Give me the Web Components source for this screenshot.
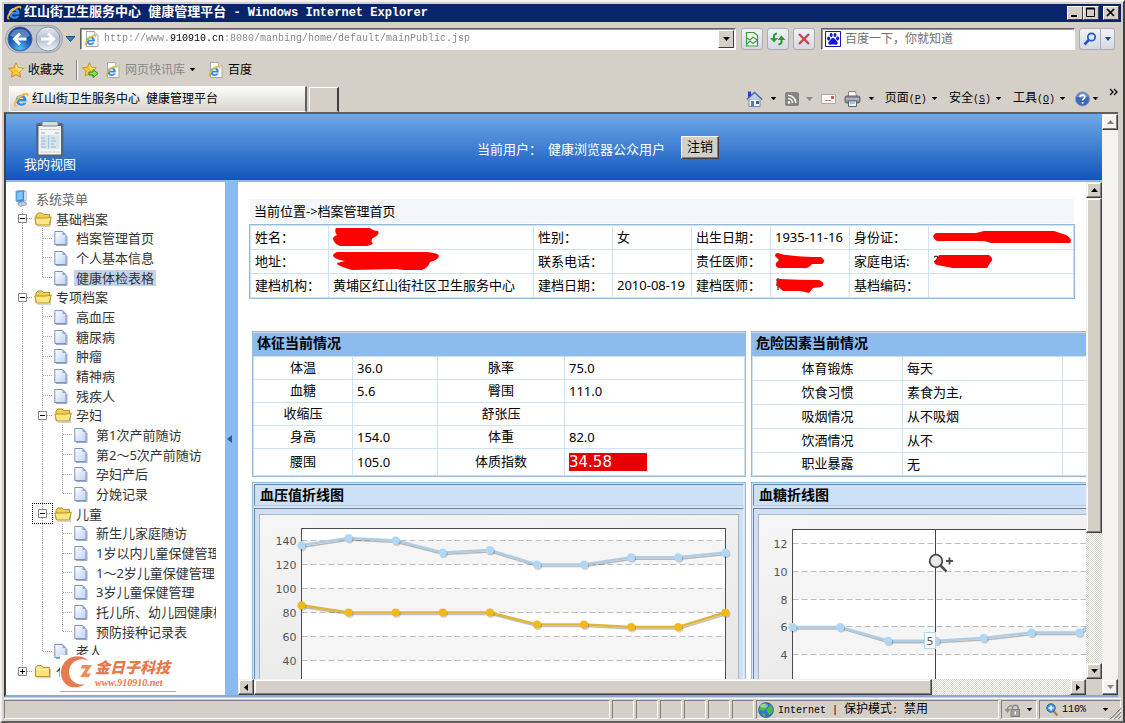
<!DOCTYPE html>
<html lang="zh-CN">
<head>
<meta charset="utf-8">
<title>红山街卫生服务中心 健康管理平台</title>
<style>
html,body{margin:0;height:100%;overflow:hidden}
body{font:12px/16px "Liberation Sans","Noto Sans CJK SC",sans-serif;background:#d4d0c8;color:#000}
</style>
</head>
<body>
<app-window></app-window>
<script>
const BASE = `*,:host{box-sizing:border-box}
button,input{font:inherit;color:inherit;margin:0;padding:0;border:0;background:none;border-radius:0;outline:0}
a{color:inherit;text-decoration:none}
.m{font-family:"Liberation Mono",monospace;font-size:10px}
ui-icon{flex:none}`;
function define(name, css, html, ready) {
  customElements.define(name, class extends HTMLElement {
    constructor() {
      super();
      this.attachShadow({ mode: 'open' });
    }
    connectedCallback() {
      if (this.shadowRoot.childNodes.length) return;
      const t = document.createElement('template');
      t.innerHTML = `<style>${BASE}${css}</style>${typeof html === 'function' ? html(this) : html}`;
      this.shadowRoot.append(t.content.cloneNode(true));
      if (ready) ready(this);
    }
  });
}

/* ---------- icons ---------- */
const E = `<path d="M3.300 9.400h10.200c.4-4-1.900-6.400-5.200-6.400-3.300 0-5.500 2.300-5.500 5.300 0 3.200 2.200 5.400 5.600 5.400 2.300 0 4.100-1 4.900-3h-3c-.5.600-1 .900-1.900.900-1.400 0-2.200-.9-2.200-2.200zm2.900-2.300c.3-1.100 1-1.700 2.100-1.700s1.900.6 2.100 1.700z" fill="#2f8fe6"/><path d="M4 6.500C5 4 7 3.200 9 3.500" fill="none" stroke="#9ad4ff" stroke-width="1"/><path d="M1.800 14.600C-.4 12.500 3 6.500 7.500 3.300 11 .8 14.800.3 15.200 2c.2.700-.1 1.500-.6 2.500.2-2-1.400-2.200-4-1C6.500 5.500 2.800 10.500 2.500 13c0 .7.5 1 1.300.8-.7.6-1.500 1-2 .8z" fill="#f8bf34" stroke="#d8991c" stroke-width=".3"/>`;
const DOC = `<path d="M2.500.5h8l3.500 3.500v11.500H2.500z" fill="#fff" stroke="#a8a8a0"/><path d="M10.500.5V4H14" fill="#e8e8e8" stroke="#b8b8b0"/>`;
const STAR = `<path d="M8 .8l2.200 4.900 5.300.6-3.900 3.600 1.100 5.300L8 12.600l-4.700 2.600 1.100-5.300L.5 6.300l5.300-.6z" fill="#fcc63a" stroke="#c98a14" stroke-width=".9"/><path d="M8 3l1.400 3.600 3.600.5-2.600 2.300" fill="none" stroke="#fff0a8" stroke-width="1.200"/>`;
const ICONS = {
  ie: [16, 16, E],
  iedoc: [16, 16, DOC + `<g transform="translate(0 3) scale(.8)">${E}</g>`],
  star: [16, 16, STAR],
  staradd: [17, 16, `<g transform="scale(.92)">${STAR}</g><path d="M7 10h4V7.500l5 4-5 4V13H7z" fill="#8ce04a" stroke="#2f8a1a"/>`],
  back: [28, 26, `<defs><radialGradient id="b" cx=".5" cy=".9" r=".95"><stop offset="0" stop-color="#4fc3f8"/><stop offset=".45" stop-color="#1c62c0"/><stop offset="1" stop-color="#0c3488"/></radialGradient></defs><circle cx="14" cy="13" r="12" fill="url(#b)" stroke="#48608c"/><path d="M4 10a10.500 10.500 0 0 1 20 0q-10 3-20 0z" fill="#fff" opacity=".3"/><path d="M20.500 13H9m5-5.500L8.500 13l5.500 5.500" fill="none" stroke="#fff" stroke-width="3"/>`],
  fwd: [28, 26, `<defs><linearGradient id="f" x2="0" y2="1"><stop offset="0" stop-color="#e8ecf2"/><stop offset=".5" stop-color="#b4bfce"/><stop offset="1" stop-color="#eef4fa"/></linearGradient></defs><circle cx="14" cy="13" r="12" fill="url(#f)" stroke="#8893a5"/><path d="M7 13h12m-5-5.500l5.500 5.500-5.500 5.500" fill="none" stroke="#fff" stroke-width="3"/>`],
  caret: [7, 4, `<path d="M1 0h5L3.500 3z" fill="#000" stroke="#000" stroke-width=".4"/>`],
  arrow: [7, 4, `<path d="M0 0h7L3.500 4z" fill="#000"/>`],
  caretgray: [7, 4, `<path d="M0 0h7L3.500 4z" fill="#8a8a8a"/>`],
  caretblue: [9, 6, `<path d="M0 .5h9L4.500 5.500z" fill="#2a86c8" stroke="#0c3d70" stroke-width=".8"/>`],
  caretnavy: [7, 4, `<path d="M1 0h6L4 4z" fill="#1c4b80"/>`],
  broken: [14, 16, `<path d="M2 1.500h7l3.500 3V15H1.500V1.500z" fill="#fff" stroke="#3d9a3d" stroke-width="1.200"/><path d="M2 7l3 2 3-3 4 3M2 13l3-3 3 2.500 4-3" fill="none" stroke="#3d9a3d" stroke-width="1.200"/>`],
  refresh: [16, 14, `<path d="M0 6h8L4 10.500z" fill="#2f9a2f"/><path d="M4 6.500V4q0-2 3-2.500" fill="none" stroke="#2f9a2f" stroke-width="2"/><path d="M7.500 8h8l-4-4.500z" fill="#2f9a2f"/><path d="M11.500 7.500V10q0 2-3 2.500" fill="none" stroke="#2f9a2f" stroke-width="2"/>`],
  stop: [14, 14, `<path d="M2 2l10 10M12 2L2 12" stroke="#c44848" stroke-width="2.400"/>`],
  paw: [16, 16, `<path d="M.5.5h15v15H.5z" fill="#fff" stroke="#1818a8"/><g fill="#1414d8"><ellipse cx="3.600" cy="7.500" rx="1.500" ry="2"/><ellipse cx="6.200" cy="4" rx="1.500" ry="2"/><ellipse cx="10" cy="4" rx="1.500" ry="2"/><ellipse cx="12.600" cy="7.500" rx="1.500" ry="2"/><path d="M8 7c2 0 2.500 2 4 3.500 1.300 1.500.5 3.500-1.500 3.300-1.500-.3-3.500-.3-5 0-2 .2-2.800-1.800-1.500-3.300C5.500 9 6 7 8 7z"/></g>`],
  mag: [14, 14, `<circle cx="8.500" cy="5" r="3.700" fill="#dcebff" stroke="#2458c8" stroke-width="1.700"/><path d="M5.800 8L1.500 12.500" stroke="#2458c8" stroke-width="2.600"/>`],
  min: [14, 12, `<path d="M3 8h6v2H3z"/>`],
  max: [14, 12, `<path d="M2.500 1v8.500h8V1z" fill="none" stroke="#000"/><path d="M2 1h9v1.500H2z"/>`],
  close: [14, 12, `<path d="M3 2l7 7M10 2L3 9" stroke="#000" stroke-width="1.700"/>`],
  home: [17, 16, `<path d="M3 8h11v7.500H3z" fill="#f4f6fc" stroke="#7888a8"/><path d="M.8 8.500L8.500 1.500l7.700 7" fill="#c3cee6" stroke="#5068a0" stroke-width="1.400"/><path d="M2 .5h3v4l-3 2.500z" fill="#2c38c8"/><path d="M5 10h3v5.500H5z" fill="#5a7ab8"/><path d="M10 10h3v3h-3z" fill="#356a80"/>`],
  rss: [14, 14, `<rect width="14" height="14" rx="2" fill="#848484"/><circle cx="4" cy="10.500" r="1.300" fill="#fff"/><path d="M3 6.500a4.500 4.500 0 0 1 4.500 4.500M3 3.200A8 8 0 0 1 10.800 11" fill="none" stroke="#fff" stroke-width="1.600"/>`],
  mail: [15, 12, `<path d="M.5 1.500h14v9H.5z" fill="#fafafa" stroke="#a8a8b0"/><path d="M4 7.500h6" stroke="#b88"/><path d="M10 3h3v3h-3z" fill="#d85858"/>`],
  printer: [17, 16, `<path d="M4.500.5h7l1 5h-8z" fill="#fff" stroke="#8a8a8a"/><rect x="1" y="5" width="15" height="7" rx="2" fill="#8a9098" stroke="#5c6168"/><path d="M2 8h13" stroke="#d5d9e0"/><path d="M4.500 10h8v5.500h-8z" fill="#eef6fa" stroke="#667"/><path d="M6 12h5" stroke="#4aa2b4"/>`],
  help: [15, 16, `<circle cx="7.500" cy="8" r="7" fill="#3c68b8" stroke="#8a96b4"/><path d="M2 5.500a6 6 0 0 1 11 0q-5.500 2-11 0z" fill="#a8c0ec" opacity=".6"/><path d="M5.200 6.300c0-3 4.800-2.800 4.600-.2-.1 1.500-2.100 1.500-2.200 3.300M7.600 11v1.700" fill="none" stroke="#fff" stroke-width="1.700"/>`],
  more: [9, 8, `<path d="M1 1l3 3-3 3M5 1l3 3-3 3" fill="none" stroke="#000" stroke-width="1.300"/>`],
  clip: [28, 36, `<rect x=".5" y="2.500" width="26.500" height="33" rx="2" fill="#5c6470" stroke="#4a6a96"/><path d="M2.500 5h22.500v28.500H2.500z" fill="#f2f4f6"/><rect x="6" y=".5" width="16" height="4.500" rx="1.500" fill="#d7dce2" stroke="#7c838c"/><path d="M4.500 8.500h19M4.500 31h19" stroke="#c4c8ce" stroke-dasharray="3 1"/><path d="M5 12h4M19 12h4M5 17h4M15 17h4M5 20h5M15 20h5M5 23h4M15 23h3M5 26h5M15 26h5" stroke="#b0a4a4"/><path d="M4.500 14h19v14h-19z" fill="#a4d0e8" opacity=".4"/><path d="M12.500 14v14" stroke="#84b8dc" opacity=".6"/>`],
  pc: [14, 17, `<path d="M2 1l8-.5 2 1v9l-6 2L2 11z" fill="#3d8ce0" stroke="#88a8c8"/><path d="M3.200 2.500l5.500-.8v7.500l-5.500.8z" fill="#7cc8fa"/><path d="M10 1v10l2-1V2z" fill="#cddcec"/><path d="M4 13l5-1.500 3.500 1.500v1.500l-6 2L4 14.500z" fill="#c0c8dc" stroke="#7888a8" stroke-width=".7"/>`],
  open: [18, 16, `<path d="M2 13.500V4l2-2h4l1.500 1.500h6V13z" fill="#efcf52" stroke="#b89324"/><path d="M2.500 14L.8 7h11.500l5-1-2 8z" fill="#fae682" stroke="#b89324"/><path d="M3.500 15.300h13V9" fill="none" stroke="#8a8a8a" opacity=".45"/>`],
  shut: [18, 16, `<path d="M1.500 13.500V4.500L3 2.500h4.500L9 4.500h6.500v9z" fill="#fae37c" stroke="#b89324"/><path d="M2.500 6.500h12" stroke="#fff6c0"/><path d="M2.500 14.800h14V6" fill="none" stroke="#8a8a8a" opacity=".45"/>`],
  file: [14, 16, `<defs><linearGradient id="g" x2="1" y2="1"><stop offset="0" stop-color="#fff"/><stop offset="1" stop-color="#bcd2f4"/></linearGradient></defs><path d="M.8 1.500h8L12 5v9.500H.8z" fill="url(#g)" stroke="#7f92bc"/><path d="M8.500 1.500V5H12z" fill="#8ea8d8"/><path d="M2 15.500h11V6" fill="none" stroke="#6070a0" opacity=".6"/>`],
  globe: [16, 16, `<circle cx="8" cy="8" r="7.500" fill="#2c78d0" stroke="#1a4a90" stroke-width=".6"/><path d="M2 4.500C4 1.500 7 1 8.500 1.500L7.500 4l1.500 2-3.500 3-2-1-2.500.5zM10 5.500l3-2.500 2 4-1 4-3 2-1.500-3-1-2zM4 11l3 1 0 3-2-1z" fill="#52b848"/><ellipse cx="6" cy="3.800" rx="4" ry="2" fill="#fff" opacity=".4"/>`],
  lock: [18, 14, `<path d="M8.500 7V5a2.800 2.800 0 0 1 5.600 0v2" fill="none" stroke="#8a8a8a" stroke-width="1.500"/><rect x="7" y="6.500" width="8.500" height="7" fill="#a0a0a0" stroke="#808080"/><path d="M11.300 8.500v3" stroke="#fff" stroke-width="1.500"/><path d="M3 8a5 5 0 0 1 5-5.500" fill="none" stroke="#909090" stroke-width="1.500"/><path d="M.5 6h6L3.500 10z" fill="#909090"/>`],
  zoom: [12, 13, `<circle cx="5" cy="5" r="4.200" fill="#4a9ae8" stroke="#1d5ca8"/><path d="M5 2.500v5M2.500 5h5" stroke="#fff" stroke-width="1.500"/><path d="M8 8.500l3.500 4" stroke="#b07838" stroke-width="2"/>`],
  up: [7, 4, `<path d="M3.500 0L7 4H0z"/>`],
  left: [4, 7, `<path d="M4 0v7L0 3.500z"/>`],
  right: [4, 7, `<path d="M0 0v7l4-3.500z"/>`],
  upgray: [7, 4, `<path d="M3.500 0L7 4H0z" fill="#808080"/>`],
  collapse: [5, 8, `<path d="M5 0v8L0 4z" fill="#2f5d94"/>`],
  plus: [9, 9, `<path d="M.5.5h8v8h-8z" fill="#fff" stroke="#848484"/><path d="M2 4.500h5M4.500 2v5" stroke="#000"/>`],
  minus: [9, 9, `<path d="M.5.5h8v8h-8z" fill="#fff" stroke="#848484"/><path d="M2 4.500h5" stroke="#000"/>`],
  grip: [12, 12, `<path d="M1 12L12 1M5 12l7-7M9 12l3-3" stroke="#808080" stroke-width="1.500"/><path d="M0 12L12 0M4 12l8-8M8 12l4-4" stroke="#fff" stroke-width=".7"/>`],
  r1: [46, 20, `<path d="M3 1h34q3 3 8 3 2 4-5 7-3 2 0 6l-6 2H7q-7-3-7-8 1-2 4-3-3-4-1-7z" fill="#f00"/>`],
  r2: [106, 20, `<path d="M4 1h90q12 1 12 4-1 4-9 6-2 6-8 8H70l-6-1-45 1Q3 15 4 12l8-2Q0 8 0 4q1-2 4-3z" fill="#f00"/>`],
  r3: [138, 14, `<path d="M3 3q10 0 40 0l8-2h70l12 4q7 4 4 8H58l-7-2-47 0Q-3 6 3 3z" fill="#f00"/>`],
  r4: [50, 17, `<path d="M3 0q7 3 34 4h9q6 4 1 7H37q-3 5-10 4H4q-4-1-3-5l3-3-4-4q0-3 3-3z" fill="#f00"/>`],
  r5: [60, 17, `<path d="M1 4q2-2 4 0-1 3-4 5" fill="none" stroke="#000"/><path d="M6 2h50q6 4 1 8l-3 5H20l-16-3q-6-3 0-6z" fill="#f00"/>`],
  r6: [50, 17, `<path d="M1 3h5M3 1v12M1 8h4" stroke="#000"/><path d="M4 2q20 1 40 1 8 4 2 7l-8 1-4 5-9-2H8Q4 11 2 8q-2-4 2-6z" fill="#f00"/>`]
};
define('ui-icon', ':host{display:inline-block;line-height:0}svg{display:block}', el => {
  const [w, h, body] = ICONS[el.getAttribute('name')];
  return `<svg width="${w}" height="${h}" viewBox="0 0 ${w} ${h}" aria-hidden="true">${body}</svg>`;
});

/* ---------- window chrome ---------- */
define('app-window', `:host{display:flex;flex-direction:column;height:100vh;background:#d4d0c8;padding:2px 2px 1px 2px;border:solid;border-width:2px;border-color:#f4f2ee #404040 #606060 #f4f2ee}
page-view{flex:1;min-height:0}`,
`<title-bar></title-bar><nav-bar></nav-bar><fav-bar></fav-bar><tab-strip></tab-strip><page-view></page-view><status-bar></status-bar>`);

define('title-bar', `:host{display:flex;align-items:center;height:18px;flex:none;background:#0a246a;color:#fff;padding:0 2px;gap:2px}
h1{flex:1;margin:0;font:bold 13px/18px "Liberation Mono","Noto Sans CJK SC",sans-serif;white-space:nowrap}
h1 span{font-size:12px}
button{width:16px;height:14px;background:#d4d0c8;border:1px solid;border-color:#fff #404040 #404040 #fff;overflow:hidden}
button:last-child{margin-left:2px}button+button{margin-left:-2px}`,
`<ui-icon name="ie"></ui-icon><h1>红山街卫生服务中心<span> </span>健康管理平台<span> - Windows Internet Explorer</span></h1>
<button aria-label="最小化"><ui-icon name="min"></ui-icon></button><button aria-label="最大化"><ui-icon name="max"></ui-icon></button><button aria-label="关闭"><ui-icon name="close"></ui-icon></button>`);

define('nav-bar', `:host{display:flex;align-items:center;height:34px;flex:none;padding:0 6px 0 2px;gap:4px}
.hist{display:flex;align-items:center;background:#c0c4cc;border-radius:13px;box-shadow:0 0 0 1px #a0a4ac}
.hist button{display:flex}
.pages{display:flex;width:10px}
.box{display:flex;align-items:center;height:22px;background:#fff;border:1px solid;border-color:#606060 #fff #fff #606060;box-shadow:inset 1px 1px #9a9a9a;padding:1px 1px 1px 3px;gap:4px}
.addr{flex:1;min-width:0}
.addr input{flex:1;min-width:0;height:16px;font:10px/16px "Liberation Mono",monospace;background:linear-gradient(90deg,#808080 66px,#000 66px 120px,#808080 120px);-webkit-background-clip:text;background-clip:text;-webkit-text-fill-color:transparent}
.drop{width:16px;height:18px;background:#d4d0c8;border:1px solid;border-color:#fff #404040 #404040 #fff;display:flex;align-items:center;justify-content:center}
.t{width:22px;height:22px;border:1px solid #a9acb4;border-radius:3px;background:linear-gradient(#f2f3f6,#d6d9e4);display:flex;align-items:center;justify-content:center}
.tools{display:flex;gap:4px;margin-left:1px}
.search{width:254px;margin-left:2px}
.search input{flex:1;min-width:0;font:12px/16px "Liberation Sans","Noto Sans CJK SC",sans-serif;height:18px}
.search input::placeholder{color:#707070;opacity:1}
.go{display:flex}.go .t:first-child{border-radius:3px 0 0 3px}.go .t:last-child{width:14px;border-left:0;border-radius:0 3px 3px 0}`,
`<div class="hist"><button aria-label="后退"><ui-icon name="back"></ui-icon></button><button aria-label="前进"><ui-icon name="fwd"></ui-icon></button></div>
<button class="pages" aria-label="最近的页面"><ui-icon name="caretblue"></ui-icon></button>
<div class="box addr"><ui-icon name="iedoc"></ui-icon><input aria-label="地址" value="http://www.910910.cn:8080/manbing/home/default/mainPublic.jsp"><button class="drop" aria-label="展开地址"><ui-icon name="arrow"></ui-icon></button></div>
<div class="tools"><button class="t" aria-label="兼容性视图"><ui-icon name="broken"></ui-icon></button><button class="t" aria-label="刷新"><ui-icon name="refresh"></ui-icon></button><button class="t" aria-label="停止"><ui-icon name="stop"></ui-icon></button></div>
<div class="box search"><ui-icon name="paw"></ui-icon><input aria-label="搜索" placeholder="百度一下，你就知道"></div>
<div class="go"><button class="t" aria-label="搜索"><ui-icon name="mag"></ui-icon></button><button class="t" aria-label="搜索选项"><ui-icon name="caretnavy"></ui-icon></button></div>`);

define('fav-bar', `:host{display:flex;align-items:center;height:28px;flex:none;padding:0 4px;gap:12px;font-size:12px;line-height:16px}
button,a{display:flex;align-items:center;gap:4px}
.sep{width:2px;height:20px;border-left:1px solid #808080;border-right:1px solid #fff;margin-right:-8px}
.off{color:#8a8a8a;margin-left:-6px}`,
`<button><ui-icon name="star"></ui-icon>收藏夹</button><span class="sep"></span><button aria-label="添加到收藏夹栏"><ui-icon name="staradd"></ui-icon></button>
<button class="off"><ui-icon name="iedoc"></ui-icon>网页快讯库 <ui-icon name="caret"></ui-icon></button><a href="#"><ui-icon name="iedoc"></ui-icon>百度</a>`);

define('tab-strip', `:host{display:flex;align-items:stretch;height:28px;flex:none;padding:2px 3px 0 5px}
.tab{width:298px;display:flex;align-items:center;gap:3px;padding:2px 0 0 3px;background:linear-gradient(#fdfdfc,#d8d4cc);border:1px solid;border-color:#fff #606060 transparent #fff;border-right-width:2px;white-space:nowrap}
.new{width:30px;margin:1px 0 0 2px;border:1px solid;border-color:#fff #404040 transparent #fff;border-right-width:2px}
.cmds{margin-left:auto;display:flex;align-items:center;gap:10px}
.g{display:flex;align-items:center;gap:8px}.h{gap:11px}
button{display:flex;align-items:center;gap:7px;white-space:nowrap}.h button{gap:4px}.h .q{gap:2px;margin-left:-2px}
.more{align-self:flex-start;padding-top:2px}`,
`<a class="tab" href="#"><ui-icon name="ie"></ui-icon><span>红山街卫生服务中心<span class="m"> </span>健康管理平台</span></a><button class="new" aria-label="新选项卡"></button>
<div class="cmds"><div class="g"><button aria-label="主页"><ui-icon name="home"></ui-icon><ui-icon name="caret"></ui-icon></button><button aria-label="源"><ui-icon name="rss"></ui-icon><ui-icon name="caretgray"></ui-icon></button><button aria-label="邮件"><ui-icon name="mail"></ui-icon></button><button aria-label="打印"><ui-icon name="printer"></ui-icon><ui-icon name="caret"></ui-icon></button></div>
<div class="g h"><button><span>页面<span class="m">(<u>P</u>)</span></span><ui-icon name="caret"></ui-icon></button><button><span>安全<span class="m">(<u>S</u>)</span></span><ui-icon name="caret"></ui-icon></button><button><span>工具<span class="m">(<u>O</u>)</span></span><ui-icon name="caret"></ui-icon></button><button class="q" aria-label="帮助"><ui-icon name="help"></ui-icon><ui-icon name="caret"></ui-icon></button></div>
<button class="more" aria-label="更多"><ui-icon name="more"></ui-icon></button></div>`);

define('status-bar', `:host{display:flex;align-items:stretch;height:22px;flex:none;padding:1px 0;gap:2px;border-top:1px solid #fff;margin-top:1px}
div{width:22px;border:1px solid;border-color:#808080 #fff #fff #808080;display:flex;align-items:center;gap:4px;white-space:nowrap;padding:0 1px}
.fill{flex:1}.net{width:243px}.lock{width:36px;justify-content:space-between;padding:0 4px 0 2px}.zoom{width:82px;padding-left:6px}
.zoom ui-icon:last-child{margin-left:12px}
.grip{align-self:flex-end;margin-left:-14px}`,
`<div class="fill"></div><div></div><div></div><div></div><div></div><div></div><div></div>
<div class="net"><ui-icon name="globe"></ui-icon><span><span class="m">Internet | </span>保护模式<span class="m">: </span>禁用</span></div>
<div class="lock"><ui-icon name="lock"></ui-icon><ui-icon name="caret"></ui-icon></div>
<div class="zoom"><ui-icon name="zoom"></ui-icon><span class="m">110%</span><ui-icon name="caret"></ui-icon></div><ui-icon class="grip" name="grip"></ui-icon>`);

/* ---------- scroll bars ---------- */
define('scroll-bar', `:host{display:flex;flex-direction:column;width:16px;background:repeating-conic-gradient(#fff 0 25%,#d8d4cc 0 50%) 0 0/2px 2px}
:host([dir-x]){flex-direction:row;width:auto;height:16px}
:host([idle]){background:#f4f3f1}
button{flex:none;width:16px;height:16px;background:#d4d0c8;border:1px solid;border-color:#f4f2ee #404040 #404040 #f4f2ee;box-shadow:inset -1px -1px #808080,inset 1px 1px #fff;display:flex;align-items:center;justify-content:center}
.thumb{background:#d4d0c8;border:1px solid;border-color:#f4f2ee #404040 #404040 #f4f2ee;box-shadow:inset -1px -1px #808080,inset 1px 1px #fff}
.track{flex:1;display:flex;flex-direction:inherit}.thumb{flex:0 0 var(--size,0)}
:host([idle]) .thumb{display:none}:host([idle]) button{background:#f4f3f1}`,
el => { const x = el.hasAttribute('dir-x'), i = el.hasAttribute('idle');
  return `<button aria-label="向前滚动"><ui-icon name="${x ? 'left' : i ? 'upgray' : 'up'}"></ui-icon></button><div class="track"><div class="thumb"></div></div><button aria-label="向后滚动"><ui-icon name="${x ? 'right' : i ? 'caretgray' : 'arrow'}"></ui-icon></button>`; });

/* ---------- web page ---------- */
define('page-view', `:host{display:flex;border:solid;border-width:2px 0 2px 2px;border-color:#606060 #808080 #8aa8d0 #404040;margin-right:3px;background:#fff;font:13px/16px "Noto Sans","Noto Sans CJK SC",sans-serif}
.col{flex:1;min-width:0;display:flex;flex-direction:column}
.row{flex:1;min-height:0;display:flex}
record-view{flex:1;min-width:0}`,
`<div class="col"><page-banner></page-banner><div class="row"><menu-tree></menu-tree><split-bar></split-bar><record-view></record-view></div></div><scroll-bar idle></scroll-bar>`);

define('page-banner', `:host{display:flex;height:68px;flex:none;background:linear-gradient(#6fa9e8,#1055bd);border-bottom:2px solid #8bb9ee;color:#fff}
.view{width:88px;display:flex;flex-direction:column;align-items:center;padding-top:7px;line-height:14px}
.user{flex:1;display:flex;align-items:center;justify-content:center;white-space:nowrap}
.user span{padding-top:4px;margin-right:6px}.user .n{margin-right:16px}
.user button{width:38px;height:23px;padding-bottom:3px;color:#000;background:#d4d0c8;border:1px solid;border-color:#fff #404040 #404040 #fff;box-shadow:inset -1px -1px #808080}`,
`<a class="view" href="#"><ui-icon name="clip"></ui-icon><span>我的视图</span></a><div class="user"><span>当前用户：</span><span class="n">健康浏览器公众用户</span><button>注销</button></div>`);

define('split-bar', `:host{width:13px;flex:none;background:#8bbaee;display:flex;align-items:center;padding-left:2px}button{display:flex}`,
`<button aria-label="收起菜单"><ui-icon name="collapse"></ui-icon></button>`);

/* Each guide letter is one 20px column: v line, e elbow, l last elbow, m/p toggles (M focused) */
define('tree-row', `:host{display:flex;align-items:stretch;min-width:0}
i{width:20px;flex:none;display:flex;align-items:center;padding-left:5px;--y:repeating-linear-gradient(#a4a4a4 0 1px,#fff 1px 2px);--x:repeating-linear-gradient(90deg,#a4a4a4 0 1px,#fff 1px 2px);background-repeat:no-repeat}
.v{background-image:var(--y);background-size:1px 100%;background-position:9px 0}
.e,.m,.M,.p{background-image:var(--y),var(--x);background-size:1px 100%,10px 1px;background-position:9px 0,10px 50%}
.l,.p{background-image:var(--y),var(--x);background-size:1px 50%,10px 1px;background-position:9px 0,10px 50%}
.M ui-icon{outline:1px dotted #000;outline-offset:5px}
.pic{width:20px;flex:none;display:flex;align-items:center;padding-left:1px}
a{align-self:center;white-space:nowrap;color:#333;padding:0 2px;margin-left:1px;line-height:16px}
:host([on]) a{background:#c3d3ea}:host([root]) a{color:#666}`,
el => `${[...el.getAttribute('guide')].map(c => `<i class="${c}">${/[mM]/.test(c) ? '<ui-icon name="minus"></ui-icon>' : c === 'p' ? '<ui-icon name="plus"></ui-icon>' : ''}</i>`).join('')}<span class="pic"><ui-icon name="${el.getAttribute('pic')}"></ui-icon></span><a href="#"><slot></slot></a>`);

const TREE = [
  ['', 'pc', '系统菜单', 'root'], ['m', 'open', '基础档案'], ['ve', 'file', '档案管理首页'], ['ve', 'file', '个人基本信息'], ['vl', 'file', '健康体检表格', 'on'],
  ['m', 'open', '专项档案'], ['ve', 'file', '高血压'], ['ve', 'file', '糖尿病'], ['ve', 'file', '肿瘤'], ['ve', 'file', '精神病'], ['ve', 'file', '残疾人'],
  ['vm', 'open', '孕妇'], ['vve', 'file', '第1次产前随访'], ['vve', 'file', '第2～5次产前随访'], ['vve', 'file', '孕妇产后'], ['vvl', 'file', '分娩记录'],
  ['vM', 'open', '儿童'], ['vve', 'file', '新生儿家庭随访'], ['vve', 'file', '1岁以内儿童保健管理'], ['vve', 'file', '1～2岁儿童保健管理'], ['vve', 'file', '3岁儿童保健管理'], ['vve', 'file', '托儿所、幼儿园健康检查'], ['vvl', 'file', '预防接种记录表'],
  ['vl', 'file', '老人'], ['p', 'shut', '亻']];
define('menu-tree', `:host{display:flex;width:219px;flex:none;position:relative;padding:7px 9px 14px 7px;background:#fff}
nav{flex:1;min-width:0;overflow:hidden;display:grid;grid-template-rows:repeat(25,minmax(19px,20px))}
site-mark{position:absolute;left:54px;bottom:3px}`,
`<nav aria-label="系统菜单">${TREE.map(([g, p, t, f = '']) => `<tree-row guide="${g}" pic="${p}" ${f}>${t}</tree-row>`).join('')}</nav><site-mark></site-mark>`);

define('site-mark', `:host{display:flex;width:116px;height:37px;background:#fff;border-bottom:1px solid #ec9474;color:#e8784c;font-style:italic;font-weight:bold;white-space:nowrap}
svg{flex:none}div{margin-left:1px;padding-top:3px}
b{display:block;font-size:15px;line-height:18px}span{display:block;font:italic bold 10px/14px "Liberation Serif",serif}`,
`<svg width="34" height="36" viewBox="0 0 34 36"><path d="M29 6C20-3 3 1 1 16c-1 14 13 21 24 13-9 2-16-4-16-12C9 7 20 1 29 6z" fill="#e87a50"/><path d="M22 10h10l-5.500 8q2 1 4.500 0l-2 4h-9l6-8.500h-5z" fill="#ec8a60"/></svg><div><b>金日子科技</b><span>www.910910.net</span></div>`);

define('record-view', `:host{display:grid;grid-template-columns:minmax(0,1fr) 16px;grid-template-rows:minmax(0,1fr) 16px;background:#d4d0c8}
main{background:#fff;overflow:hidden;padding:17px 11px 0}
.loc{margin:0 1px 1px;height:24px;line-height:24px;padding-left:4px;background:#f3f7fb}
.panels{display:grid;grid-template-columns:494px 494px;gap:5px;margin:32px 0 0 3px}
.v{--size:335px}.h{--size:678px}
table{border-collapse:collapse;table-layout:fixed;width:100%}
td{border:1px solid #cfe2f1;padding:0 0 1px;height:24px;white-space:nowrap}
th{border:1px solid #cfe2f1;padding:0 0 2px;font-weight:normal}
.info{border:1px solid #92badc}
.info th{text-align:left;padding-left:4px}.info td{padding-left:4px}
.info td ui-icon{display:block}
.data th{text-align:center}.data td{padding-left:4px}
.sign tr{height:23px}.sign td{height:23px}.sign tr:last-child{height:27px}
.risk tr:last-child td{height:23px}
mark{display:block;width:78px;background:#e80000;color:#fff;font:15px/18px "DejaVu Sans",sans-serif}`,
() => {
  const sign = [['体温', '36.0', '脉率', '75.0'], ['血糖', '5.6', '臀围', '111.0'], ['收缩压', '', '舒张压', ''], ['身高', '154.0', '体重', '82.0'], ['腰围', '105.0', '体质指数', '<mark>34.58</mark>']];
  const risk = [['体育锻炼', '每天'], ['饮食习惯', '素食为主,'], ['吸烟情况', '从不吸烟'], ['饮酒情况', '从不'], ['职业暴露', '无']];
  const r = n => `<ui-icon name="r${n}"></ui-icon>`;
  const info = [['姓名：', r(1), '性别：', '女', '出生日期：', '1935-11-16', '身份证：', r(3)], ['地址：', r(2), '联系电话：', '', '责任医师：', r(4), '家庭电话:', r(5)], ['建档机构：', '黄埔区红山街社区卫生服务中心', '建档日期：', '2010-08-19', '建档医师：', r(6), '基档编码：', '']];
  const rows = a => a.map(x => `<tr>${x.map((c, i) => i % 2 ? `<td>${c}</td>` : `<th scope="row">${c}</th>`).join('')}</tr>`).join('');
  return `<main><div class="loc">当前位置-&gt;档案管理首页</div>
<div class="info"><table><colgroup><col style="width:78px"><col style="width:205px"><col span="5" style="width:79px"><col></colgroup>${rows(info)}</table></div>
<div class="panels">
<data-panel heading="体征当前情况"><table class="data sign"><colgroup><col style="width:99px"><col style="width:85px"><col style="width:127px"><col></colgroup>${rows(sign)}</table></data-panel>
<data-panel heading="危险因素当前情况"><table class="data risk"><colgroup><col style="width:150px"><col style="width:160px"><col></colgroup>${rows(risk).replace(/<\/tr>/g, '<td></td></tr>')}</table></data-panel>
<chart-panel heading="血压值折线图"><line-chart kind="bp"></line-chart></chart-panel>
<chart-panel heading="血糖折线图"><line-chart kind="sugar"></line-chart></chart-panel>
</div></main><scroll-bar class="v"></scroll-bar><scroll-bar class="h" dir-x></scroll-bar>`;
});

define('data-panel', `:host{display:block;border:1px solid #92badc}
h2{margin:0;font-size:14px;line-height:22px;height:24px;padding-left:4px;background:#8cbbee;box-shadow:inset 0 1px #c4dcf4}`,
el => `<h2>${el.getAttribute('heading')}</h2><slot></slot>`);

define('chart-panel', `:host{display:block;border:1px solid #92badc;padding:1px;background:#d6e6f8}
h2{margin:0 0 2px;font-size:14px;line-height:20px;height:22px;padding-left:5px;background:#cce0f8;border:1px solid;border-color:#70869c #e4eef8 #b8cce0 #70869c}
div{border:1px solid;border-color:#70869c #e4eef8 #b8cce0 #70869c;padding:5px 4px;background:#cfe0f5}
::slotted(*){border:1px solid #a4b6c6}`,
el => `<h2>${el.getAttribute('heading')}</h2><div><slot></slot></div>`);

const CHARTS = {
  bp: { x: 41.5, w: 424, top: 13.5, first: 25.5, step: 24, labels: [140, 120, 100, 80, 60, 40], unit: 1.2, dx: 47.1, bandFrom: 0, label: '血压值折线图',
    series: [['#afd8f8', '#aecde4', [136, 142, 140, 130, 132, 120, 120, 126, 126, 130]], ['#f0b91c', '#e0b636', [86, 80, 80, 80, 80, 70, 70, 68, 68, 80]]] },
  sugar: { x: 33.5, w: 430, top: 14.5, first: 28.5, step: 27.8, labels: [12, 10, 8, 6, 4, 2], unit: 13.9, dx: 47.8, bandFrom: 1, cross: 176.5, label: '血糖折线图',
    series: [['#afd8f8', '#aecde4', [6, 6, 5, 5, 5.2, 5.6, 5.6, 8, 7, 6]]] }
};
define('line-chart', ':host{display:block;background:linear-gradient(170deg,#f6f6f6,#e2e2e2)}svg{display:block;width:100%;height:225px}text{font:11px "DejaVu Sans",sans-serif;fill:#555}', el => {
  const c = CHARTS[el.getAttribute('kind')], y = v => c.first + (c.labels[0] - v) * c.unit, r = c.x + c.w;
  let s = `<rect x="${c.x}" y="${c.top}" width="${c.w}" height="240" fill="#fff" stroke="#4c4c4c"/>`;
  c.labels.forEach((t, i) => {
    const p = Math.floor(c.first + i * c.step) + .5;
    if (i % 2 === c.bandFrom) s += `<rect x="${c.x + .5}" y="${p}" width="${c.w - 1}" height="${c.step}" fill="#f5f5f5"/>`;
    s += `<path d="M${c.x} ${p}H${r}" stroke="#bcbcbc" stroke-dasharray="6 3"/><text x="${c.x - 5}" y="${p + 4}" text-anchor="end">${t}</text>`;
  });
  s += `<path d="M${c.x} ${c.top}v240" stroke="#4c4c4c"/><path d="M${r} ${c.top}v240" stroke="#4c4c4c"/>`;
  if (c.cross) s += `<path d="M${c.cross} ${c.top}v240" stroke="#444"/>`;
  for (const [dot, line, vals] of c.series) {
    const pts = vals.map((v, i) => [c.x + i * c.dx, y(v)]);
    const str = pts.map(p => p.join()).join(' ');
    s += `<polyline points="${str}" transform="translate(1 2)" fill="none" stroke="#000" stroke-opacity=".25" stroke-width="1.500"/><polyline points="${str}" fill="none" stroke="${line}" stroke-width="2.500"/>`;
    pts.forEach(([a, b]) => s += `<circle cx="${a + 1}" cy="${b + 1.5}" r="4" fill="#000" opacity=".18"/><circle cx="${a}" cy="${b}" r="4" fill="${dot}"/>`);
  }
  if (c.cross) s += `<rect x="165.500" y="117.500" width="11" height="16" fill="#fff" stroke="#afd8ec"/><text x="171" y="130" text-anchor="middle">5</text><circle cx="177" cy="46" r="6.300" fill="#e8e8e8" stroke="#4c4c4c" stroke-width="1.800"/><path d="M181.500 50.500l6 6" stroke="#4c4c4c" stroke-width="2.500"/><path d="M187 46h7M190.500 42.500v7" stroke="#4c4c4c" stroke-width="1.800"/>`;
  return `<svg role="img" aria-label="${c.label}">${s}</svg>`;
});
</script>
</body>
</html>
